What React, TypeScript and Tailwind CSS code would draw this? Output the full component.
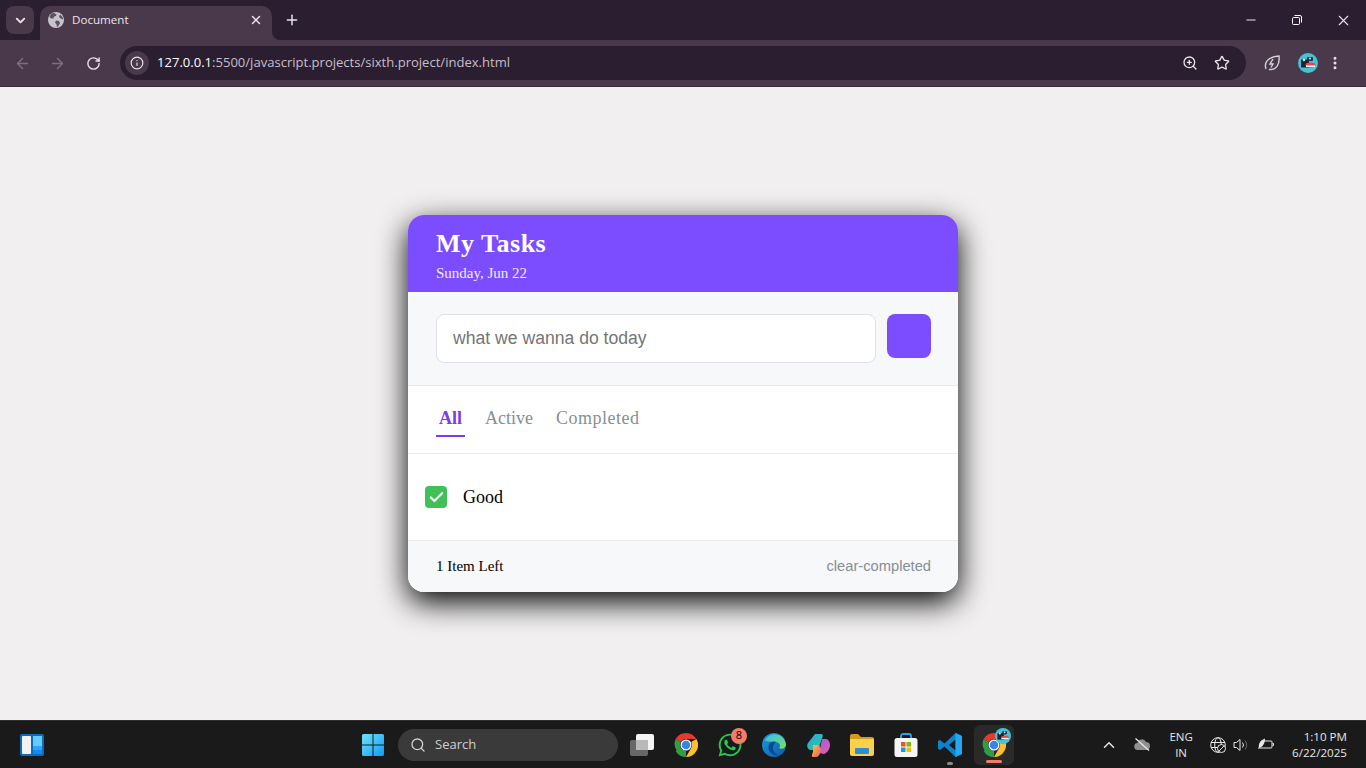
import React from "react";
import { ChevronDown, X, Plus, ArrowLeft, ArrowRight, RotateCw, Info, ZoomIn, Star, EllipsisVertical, Minus, Search, ChevronUp, Check } from "lucide-react";
import { FaWhatsapp } from "react-icons/fa";

const UI = "font-['Open_Sans','Noto_Sans',sans-serif]";
const SERIF = "font-['Liberation_Serif',serif]";

function GlobeFav() {
  return (
    <svg width="16" height="16" viewBox="0 0 16 16">
      <circle cx="8" cy="8" r="8" fill="#c8c3cb" />
      <path d="M5 .8 8.5 2.2 8 4 6 4.6 5.4 6.6 3.2 6.4 1.4 5A8 8 0 0 1 5 .8ZM8 8.4l3 .6 1 2-1.6 3-1.4 1-.6-3-1.4-1.2ZM12 2.4l2.6 2.6.6 2.4-2.4-.8L11 5Z" fill="#5b5160" />
    </svg>
  );
}

function Avatar({ size }: { size: number }) {
  return (
    <svg width={size} height={size} viewBox="0 0 20 20">
      <circle cx="10" cy="10" r="10" fill="#45c3d6" />
      <rect x="3" y="6.5" width="8" height="8" fill="#1c2333" />
      <rect x="9" y="4" width="6" height="4" rx="1" fill="#29304a" />
      <circle cx="6" cy="7" r="1.2" fill="#f3e6e6" />
      <circle cx="12" cy="5.5" r="1" fill="#f3e6e6" />
      <ellipse cx="12.5" cy="12" rx="5" ry="2.4" fill="#e8474a" />
      <rect x="8" y="12.4" width="9" height="1.6" fill="#f5f5f5" />
    </svg>
  );
}

function ChromeLogo({ size = 24 }: { size?: number }) {
  return (
    <svg width={size} height={size} viewBox="0 0 48 48">
      <path d="M24 0a24 24 0 0 1 20.8 12H24a12 12 0 0 0-10.4 6L3.2 12A24 24 0 0 1 24 0Z" fill="#e33b2e" />
      <path d="M3.2 12 13.600 18a12 12 0 0 0 10.400 18L13.600 42.780 A24 24 0 0 1 3.200 12Z" fill="#2f9e44" />
      <path d="M44.800 12A24 24 0 0 1 24 48L34.400 30A12 12 0 0 0 34.400 18 Z" fill="#fbc02d" />
      <path d="M13.600 30A12 12 0 0 0 24 36L24 48A24 24 0 0 1 3.200 36Z" fill="#2f9e44" />
      <circle cx="24" cy="24" r="11" fill="#fff" />
      <circle cx="24" cy="24" r="8.500" fill="#3b82e6" />
    </svg>
  );
}

function WinLogo() {
  return (
    <svg width="24" height="24" viewBox="0 0 24 24">
      <defs>
        <linearGradient id="wl" x1="0" y1="0" x2="1" y2="1">
          <stop offset="0" stopColor="#6fe3fb" />
          <stop offset="1" stopColor="#0f9bf5" />
        </linearGradient>
      </defs>
      <path d="M1 2.500A1.500 1.500 0 0 1 2.500 1H11.500V11.500H1ZM12.500 1H21.500A1.500 1.500 0 0 1 23 2.500V11.500H12.500ZM1 12.500H11.500V23H2.500A1.500 1.500 0 0 1 1 21.500ZM12.500 12.500H23V21.500A1.500 1.500 0 0 1 21.500 23H12.500Z" fill="url(#wl)" />
    </svg>
  );
}

function Widgets() {
  return (
    <svg width="24" height="22" viewBox="0 0 24 22">
      <rect width="24" height="22" rx="2" fill="#0f6cbd" />
      <rect x="2" y="2" width="9" height="18" rx="1" fill="#f2f2f2" />
      <rect x="13" y="2" width="9" height="10" fill="#62ccff" />
      <rect x="13" y="12" width="9" height="4" fill="#2aa7f5" />
      <rect x="13" y="16" width="9" height="4" fill="#0a8ef0" />
    </svg>
  );
}

function TaskView() {
  return (
    <svg width="24" height="22" viewBox="0 0 24 22">
      <rect x="6" y="0" width="18" height="16" rx="2" fill="#f4f4f4" />
      <rect x="0" y="6" width="18" height="16" rx="2" fill="#6e6e6e" fillOpacity="0.92" />
      <rect x="6" y="6" width="12" height="10" fill="#b9b9b9" />
    </svg>
  );
}

function Edge() {
  return (
    <svg width="24" height="24" viewBox="0 0 24 24">
      <defs>
        <linearGradient id="eg" x1="0" y1="0" x2="1" y2="1">
          <stop offset="0" stopColor="#1b9de2" />
          <stop offset="1" stopColor="#0c59a4" />
        </linearGradient>
        <linearGradient id="eg2" x1="0" y1="0" x2="1" y2="1">
          <stop offset="0" stopColor="#35c1f1" />
          <stop offset="1" stopColor="#7fdc5a" />
        </linearGradient>
      </defs>
      <circle cx="12" cy="12" r="12" fill="url(#eg)" />
      <path d="M3 8C6-1 21-2 24 11c0 4-4 6-7 4 2-2 1-6-4-6-5 0-9-1-10-1Z" fill="url(#eg2)" />
      <path d="M14 9c-5-2-9 3-7 8 1.500 4 6 6 10 5C10 21 9 12 14 9Z" fill="#0b4a8a" />
    </svg>
  );
}

function Copilot() {
  return (
    <svg width="23" height="24" viewBox="0 0 23 24">
      <defs>
        <linearGradient id="c1" x1="0" y1="0" x2="1" y2="1">
          <stop offset="0" stopColor="#2aa5e8" />
          <stop offset="1" stopColor="#2dcc8f" />
        </linearGradient>
        <linearGradient id="c2" x1="0" y1="0" x2="1" y2="1">
          <stop offset="0" stopColor="#a05de0" />
          <stop offset="1" stopColor="#e25fa6" />
        </linearGradient>
        <linearGradient id="c3" x1="0" y1="0" x2="1" y2="1">
          <stop offset="0" stopColor="#f6c343" />
          <stop offset="1" stopColor="#ef5a5a" />
        </linearGradient>
      </defs>
      <path d="M8 1h6c2 0 2 2 1.500 3L11 17H4C1 17-1 13 1 10Z" fill="url(#c1)" />
      <path d="M15 6h4c2 0 4 3 4 6 0 4-3 8-6 9l-5-1Z" fill="url(#c2)" />
      <path d="M6 12h6l2 5c-1 4-2 7-5 7H6c-2 0-1-3 0-5Z" fill="url(#c3)" />
    </svg>
  );
}

function Folder() {
  return (
    <svg width="24" height="22" viewBox="0 0 24 22">
      <path d="M0 2a2 2 0 0 1 2-2h6l3 3h11a2 2 0 0 1 2 2v3H0Z" fill="#d49c1c" />
      <path d="M0 5h24v15a2 2 0 0 1-2 2H2a2 2 0 0 1-2-2Z" fill="#fbd04c" />
      <rect x="5" y="14" width="14" height="6" rx="1" fill="#2a8ed6" />
    </svg>
  );
}

function Store() {
  return (
    <svg width="24" height="24" viewBox="0 0 24 24">
      <path d="M7 6V3a2 2 0 0 1 2-2h6a2 2 0 0 1 2 2v3" fill="none" stroke="#2aa5e8" strokeWidth="1.800" />
      <rect x="0.500" y="5" width="23" height="19" rx="2.500" fill="#f5f5f5" />
      <rect x="7" y="9" width="4.500" height="4.500" fill="#f25022" />
      <rect x="12.500" y="9" width="4.500" height="4.500" fill="#7fba00" />
      <rect x="7" y="14.500" width="4.500" height="4.500" fill="#00a4ef" />
      <rect x="12.500" y="14.500" width="4.500" height="4.500" fill="#ffb900" />
    </svg>
  );
}

function VSCode() {
  return (
    <svg width="24" height="24" viewBox="0 0 24 24">
      <path d="M17.500 0 24 3v18l-6.500 3L6.500 13.500 2 17l-2-1V8l2-1 4.500 3.500Zm0 6.500L11 12l6.500 5.500Z" fill="#0d83cf" />
      <path d="M17.500 0 24 3v18l-6.500 3Z" fill="#22a7f0" />
    </svg>
  );
}

function Slot({ children, className = "" }: { children?: React.ReactNode; className?: string }) {
  return <div className={`relative flex h-10 w-11 shrink-0 items-center justify-center ${className}`}>{children}</div>;
}

function Tray() {
  return (
    <div className={`ml-auto flex h-full items-center text-[#e6e6e6] ${UI}`}>
      <ChevronUp size={18} strokeWidth={2} className="mr-[16px]" />
      <svg width="16" height="13" viewBox="0 0 16 13" className="mr-[17px]">
        <path d="M4 12a3.500 3.500 0 0 1-.5-7 4.500 4.500 0 0 1 8.500-1 4 4 0 0 1 0 8Z" fill="#8f8f8f" />
        <path d="M1.500 0.500 15 12.500" stroke="#e8e8e8" strokeWidth="1.300" />
      </svg>
      <div className="mr-[15px] flex w-[28px] flex-col items-center text-[11.500px] leading-[16px]">
        <span>ENG</span>
        <span>IN</span>
      </div>
      <svg width="16" height="16" viewBox="0 0 16 16" fill="none" stroke="#e8e8e8" strokeWidth="1" className="mr-[7px]">
        <circle cx="8" cy="8" r="7.300" />
        <ellipse cx="8" cy="8" rx="3.300" ry="7.300" />
        <path d="M1 5.500h14M1 10.500h14" />
        <circle cx="11.500" cy="11.500" r="4" fill="#1a1a1a" />
        <path d="M9 14l5-5" />
      </svg>
      <svg width="17" height="14" viewBox="0 0 17 14" fill="none" stroke="#e8e8e8" strokeWidth="1" className="mr-[7px]">
        <path d="M1 4.500h2.500L7 1.500v11l-3.500-3H1Z" />
        <path d="M9.500 4.500a4 4 0 0 1 0 5" />
        <path d="M12 2.500a7 7 0 0 1 0 9" stroke="#6a6a6a" />
      </svg>
      <svg width="17" height="13" viewBox="0 0 17 13" fill="none" stroke="#e8e8e8" strokeWidth="1" className="mr-[18px]">
        <path d="M5 3h9a1 1 0 0 1 1 1v5a1 1 0 0 1-1 1H1" />
        <path d="M15.500 5.500h1v2h-1" />
        <path d="M2 10C1 5 4 2 8 .5 8 5 6 9 2 10Z" fill="#e8e8e8" stroke="none" />
      </svg>
      <div className="mr-[19px] flex flex-col items-end text-[11.600px] leading-[16px]">
        <span>1:10 PM</span>
        <span>6/22/2025</span>
      </div>
    </div>
  );
}

export default function App() {
  return (
    <div className="flex h-screen w-full flex-col overflow-hidden bg-[#f1eff0]">
      <header className={`shrink-0 text-[#e9e4ea] ${UI}`}>
        <div className="flex h-10 items-end bg-[#2a1e30] pl-[6px]">
          <button className="mb-[6px] flex h-7 w-7 items-center justify-center rounded-lg bg-[#4a394b]">
            <ChevronDown size={15} strokeWidth={3} />
          </button>
          <div className="relative ml-[6px] flex h-[34px] w-[232px] items-center rounded-t-[10px] bg-[#4a394b] pb-[6px] pl-[8px] pr-[9px]">
            <GlobeFav />
            <span className="ml-[8px] text-[11.600px]">Document</span>
            <X size={14} strokeWidth={2.5} className="ml-auto" />
            <svg width="8" height="8" viewBox="0 0 8 8" className="absolute bottom-0 right-[-8px]">
              <path d="M0 0A8 8 0 0 0 8 8H0Z" fill="#4a394b" />
            </svg>
          </div>
          <Plus size={16} strokeWidth={2.2} className="mb-[12px] ml-[12px]" />
          <div className="ml-auto flex h-10 items-center">
            <div className="flex w-[46px] justify-center"><Minus size={14} /></div>
            <div className="flex w-[46px] justify-center">
              <svg width="10" height="10" viewBox="0 0 10 10" fill="none" stroke="#fff" strokeWidth="1">
                <rect x="0.500" y="2.500" width="7" height="7" rx="1" />
                <path d="M2.500 0.500H8a1.500 1.500 0 0 1 1.500 1.500V7.500" />
              </svg>
            </div>
            <div className="flex w-[46px] justify-center"><X size={17} strokeWidth={1.5} /></div>
          </div>
        </div>
        <div className="flex h-[47px] items-center border-b border-[#3b2d3c] bg-[#4a394b]">
          <ArrowLeft size={17} strokeWidth={2} className="ml-[14px] text-[#7d6f7e]" />
          <ArrowRight size={17} strokeWidth={2} className="ml-[18px] text-[#7d6f7e]" />
          <RotateCw size={15} strokeWidth={2.2} className="ml-[20px]" />
          <div className="ml-[19px] flex h-[34px] w-[1126px] items-center rounded-full bg-[#2a1e30] pl-[5px] pr-[16px]">
            <div className="flex h-6 w-6 items-center justify-center rounded-full bg-[#4a394b]">
              <Info size={14} strokeWidth={2} />
            </div>
            <span className="ml-[8px] text-[13.050px] text-[#c8bfca]">
              <span className="text-white">127.0.0.1</span>:5500/javascript.projects/sixth.project/index.html
            </span>
            <ZoomIn size={16} strokeWidth={2} className="ml-auto" />
            <Star size={16} strokeWidth={2} className="ml-[16px]" />
          </div>
          <svg width="16" height="16" viewBox="0 0 16 16" fill="none" stroke="#d8d0da" strokeWidth="1.400" className="ml-[18px]">
            <path d="M2 14C0 8 3 2 15 1c1 9-3 14-10 13.500" />
            <path d="M9 4 6 9h3L7 12.500" />
          </svg>
          <div className="ml-[18px]"><Avatar size={20} /></div>
          <EllipsisVertical size={16} strokeWidth={2.5} className="ml-[9px]" />
        </div>
      </header>

      <main className="flex flex-1 items-center justify-center">
        <div className={`flex w-[550px] flex-col overflow-hidden rounded-2xl bg-white shadow-[0_10px_30px_#000] ${SERIF}`}>
          <div className="flex h-[77px] flex-col bg-[#7c4dff] pl-7 text-white">
            <h1 className="mt-[11px] text-[26px] font-bold leading-[36px] tracking-[0.5px]">My Tasks</h1>
            <p className="mt-[1px] text-[15px] leading-[20px] text-[#f0ebff]">Sunday, Jun 22</p>
          </div>
          <div className="flex h-[94px] items-start gap-[11px] border-b border-[#e6e8ee] bg-[#f7f8fa] pl-7 pt-[22px]">
            <input
              readOnly
              placeholder="what we wanna do today"
              className="h-[49px] w-[440px] rounded-lg border border-[#dfe2ea] bg-white px-4 font-['Liberation_Sans',sans-serif] text-[17.600px] outline-none placeholder:text-[#757575]"
            />
            <button className="h-11 w-11 rounded-lg bg-[#7c4dff]" />
          </div>
          <div className="flex h-[68px] items-start border-b border-[#e9ecef] pl-7 pt-[14px] text-[18px] leading-[26px] text-[#868e96]">
            <button className="h-[37px] border-b-2 border-[#7c3aed] px-[3px] font-bold leading-[26px] text-[#7c3aed]">All</button>
            <button className="ml-[20px] h-[37px] border-b-2 border-transparent leading-[26px]">Active</button>
            <button className="ml-[23px] h-[37px] border-b-2 border-transparent leading-[26px] tracking-[0.5px]">Completed</button>
          </div>
          <div className="flex h-[87px] items-center gap-4 border-b border-[#e9ecef] pl-[17px]">
            <span className="flex h-[22px] w-[22px] items-center justify-center rounded bg-[#40c057] text-white">
              <Check size={17} strokeWidth={3} />
            </span>
            <span className="text-[18px] text-black">Good</span>
          </div>
          <div className="flex h-[51px] items-center justify-between bg-[#f7f8fa] pl-7 pr-[27px]">
            <span className="text-[15px] text-black">1 Item Left</span>
            <span className="font-['Liberation_Sans',sans-serif] text-[14.700px] text-[#868e96]">clear-completed</span>
          </div>
        </div>
      </main>

      <footer className="flex h-12 shrink-0 items-center border-t border-[#2e2e2e] bg-[#1a1a1a]">
        <div className="ml-5 w-[331px]"><Widgets /></div>
        <Slot><WinLogo /></Slot>
        <div className={`ml-[3px] mr-[2px] flex h-8 w-[220px] items-center rounded-full bg-[#3a3a3a] pl-[12px] text-[13px] text-[#cfcfcf] ${UI}`}>
          <Search size={16} strokeWidth={2} />
          <span className="ml-[9px]">Search</span>
        </div>
        <Slot><TaskView /></Slot>
        <Slot><ChromeLogo /></Slot>
        <Slot>
          <FaWhatsapp size={26} className="text-[#25c94e]" />
          <span className={`absolute right-[5px] top-[3px] flex h-4 w-4 items-center justify-center rounded-full bg-[#f47c6a] text-[11px] text-black ${UI}`}>8</span>
        </Slot>
        <Slot><Edge /></Slot>
        <Slot><Copilot /></Slot>
        <Slot><Folder /></Slot>
        <Slot><Store /></Slot>
        <Slot>
          <VSCode />
          <span className="absolute bottom-[2px] h-[3px] w-[6px] translate-y-[2px] rounded-full bg-[#8a8a8a]" />
        </Slot>
        <Slot className="mx-[2px] !w-10 rounded-md bg-[#2a2a2a]">
          <ChromeLogo />
          <span className="absolute right-[3px] top-[3px]"><Avatar size={16} /></span>
          <span className="absolute bottom-[2px] h-[3px] w-4 rounded-full bg-[#f47c6a]" />
        </Slot>
        <Tray />
      </footer>
    </div>
  );
}
